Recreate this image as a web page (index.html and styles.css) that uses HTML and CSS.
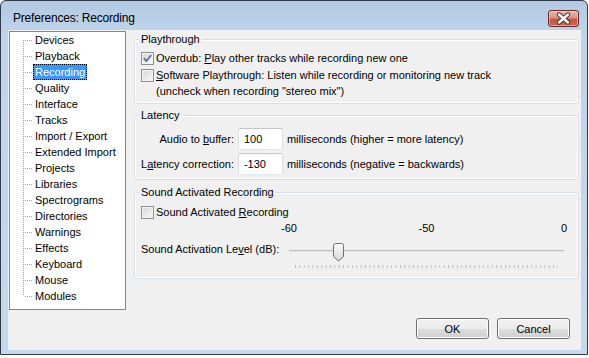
FILE: index.html
```html
<!DOCTYPE html>
<html>
<head>
<meta charset="utf-8">
<title>Preferences: Recording</title>
<link rel="stylesheet" href="styles.css">
</head>
<body>
<div class="window">
  <div class="titlebar">
    <span class="title">Preferences: Recording</span>
    <div class="close" aria-label="Close">
      <svg width="31" height="17" viewBox="0 0 31 17">
        <path d="M11 4.5 L20 12.5 M20 4.5 L11 12.5" stroke="#4a3030" stroke-width="4.4" stroke-linecap="round" fill="none"/>
        <path d="M11 4.5 L20 12.5 M20 4.5 L11 12.5" stroke="#ffffff" stroke-width="2.4" stroke-linecap="round" fill="none"/>
      </svg>
    </div>
  </div>
  <div class="client">
    <div class="main">
      <div class="tree">
        <ul>
          <li><span>Devices</span></li>
          <li><span>Playback</span></li>
          <li class="sel"><span>Recording</span></li>
          <li><span>Quality</span></li>
          <li><span>Interface</span></li>
          <li><span>Tracks</span></li>
          <li><span>Import / Export</span></li>
          <li><span>Extended Import</span></li>
          <li><span>Projects</span></li>
          <li><span>Libraries</span></li>
          <li><span>Spectrograms</span></li>
          <li><span>Directories</span></li>
          <li><span>Warnings</span></li>
          <li><span>Effects</span></li>
          <li><span>Keyboard</span></li>
          <li><span>Mouse</span></li>
          <li><span>Modules</span></li>
        </ul>
      </div>
      <div class="panel">
        <div class="group g1">
          <div class="legend">Playthrough</div>
          <div class="check r1"><span class="box"><svg width="11" height="11" viewBox="0 0 11 11"><path d="M1.8 5.2 L4.3 8 L9.2 2" stroke="#5a6f9c" stroke-width="1.8" fill="none"/></svg></span><span>Overdub: <u>P</u>lay other tracks while recording new one</span></div>
          <div class="check r2"><span class="box"></span><span><u>S</u>oftware Playthrough: Listen while recording or monitoring new track</span></div>
          <div class="note">(uncheck when recording "stereo mix")</div>
        </div>
        <div class="group g2">
          <div class="legend">Latency</div>
          <div class="latency">
            <span class="lab">Audio to <u>b</u>uffer:</span>
            <span class="field">100</span>
            <span>milliseconds (higher = more latency)</span>
            <span class="lab">L<u>a</u>tency correction:</span>
            <span class="field">-130</span>
            <span>milliseconds (negative = backwards)</span>
          </div>
        </div>
        <div class="group g3">
          <div class="legend">Sound Activated Recording</div>
          <div class="check r3"><span class="box"></span><span>Sound Activated <u>R</u>ecording</span></div>
          <div class="level">
            <div class="scale">
              <span class="mark"><span>-60</span></span>
              <span class="mark"><span>-50</span></span>
              <span class="mark"><span>0</span></span>
            </div>
            <span class="levlab">Sound Activation Le<u>v</u>el (dB):</span>
            <div class="slider">
              <div class="track"></div>
              <div class="ticks"></div>
              <svg class="thumb" width="11" height="19" viewBox="0 0 11 19">
                <defs>
                  <linearGradient id="tg" x1="0" y1="0" x2="0" y2="1">
                    <stop offset="0" stop-color="#fbfbfb"/>
                    <stop offset="1" stop-color="#d8d8d8"/>
                  </linearGradient>
                </defs>
                <path d="M0.5 2.5 A2 2 0 0 1 2.5 0.5 H8.5 A2 2 0 0 1 10.5 2.5 V13.5 L5.5 18 L0.5 13.5 Z" fill="url(#tg)" stroke="#707070"/>
              </svg>
            </div>
          </div>
        </div>
      </div>
    </div>
    <div class="buttons">
      <div class="btn">OK</div>
      <div class="btn">Cancel</div>
    </div>
  </div>
</div>
</body>
</html>
```

FILE: styles.css
```css
html, body {
  margin: 0;
  padding: 0;
  background: #ffffff;
}

body {
  font-family: "Liberation Sans", Arial, sans-serif;
  font-size: 11px;
  color: #000;
}

.window {
  width: 588px;
  height: 355px;
  box-sizing: border-box;
  border: 1px solid #2f3b47;
  border-radius: 6px 6px 0 0;
  background: linear-gradient(#b1c9e2, #bed4eb 30px, #c4d8ee);
  box-shadow: 0 1px 0 #4aa8b6, 0 2px 0 #6cc0cc;
  overflow: hidden;
}

.titlebar {
  height: 29px;
  display: flex;
  align-items: flex-start;
  justify-content: space-between;
  padding: 0 8px 0 12px;
}

.title {
  margin-top: 10px;
  font-size: 12px;
  line-height: 14px;
  letter-spacing: -0.2px;
  color: #000;
}

.close {
  margin-top: 9px;
  width: 31px;
  height: 17px;
  box-sizing: border-box;
  border: 1px solid #6b2a2a;
  border-radius: 3px;
  background: linear-gradient(#e9b4a8 0%, #dd948a 45%, #c8503f 55%, #d06a55 100%);
  box-shadow: inset 0 0 0 1px rgba(255, 220, 210, 0.5);
  display: flex;
  align-items: center;
  justify-content: center;
}

.close svg {
  display: block;
  margin: -1px;
}

.client {
  margin: 0 6px 0 7px;
  height: 320px;
  background: #f0f0f0;
  display: flex;
  flex-direction: column;
}

.main {
  display: flex;
  align-items: flex-start;
  padding: 1px 0 0 1px;
}

.tree {
  width: 117px;
  height: 279px;
  box-sizing: border-box;
  border: 1px solid #828790;
  background: #fff;
}

.tree ul {
  list-style: none;
  margin: 0;
  padding: 0;
}

.tree li {
  position: relative;
  height: 16px;
  padding-left: 23px;
}

.tree li::before {
  content: "";
  position: absolute;
  left: 13px;
  top: 0;
  bottom: 0;
  width: 1px;
  background: repeating-linear-gradient(to bottom, #a0a0a0 0 1px, transparent 1px 2px);
}

.tree li:first-child::before {
  top: 8px;
}

.tree li:last-child::before {
  bottom: 8px;
}

.tree li::after {
  content: "";
  position: absolute;
  left: 15px;
  top: 8px;
  width: 8px;
  height: 1px;
  background: repeating-linear-gradient(to right, #a0a0a0 0 1px, transparent 1px 2px);
}

.tree li span {
  display: inline-block;
  line-height: 14px;
  padding: 0 1px;
  border: 1px solid transparent;
}

.tree li.sel span {
  background: #3399ff;
  color: #fff;
  border: 1px dotted #000;
}

.panel {
  flex: 1;
  margin: 0 2px 0 8px;
  padding-top: 8px;
}

.group {
  box-sizing: border-box;
  border: 1px solid #d5dfe5;
  border-radius: 3px;
  box-shadow: inset 0 0 0 1px #ffffff;
  display: flex;
  flex-direction: column;
  align-items: flex-start;
}

.g1 { height: 65px; }
.g2 { height: 65px; margin-top: 11px; }
.g3 { height: 87px; margin-top: 12px; }

.legend {
  margin: -7px 0 0 4px;
  padding: 0 2px;
  line-height: 13px;
  background: #f0f0f0;
}

.check {
  display: flex;
  align-items: center;
  height: 16px;
  padding-left: 6px;
}

.r1 { margin-top: 4px; }
.r2 { margin-top: 1px; }
.r3 { margin-top: 5px; }

.box {
  width: 13px;
  height: 13px;
  box-sizing: border-box;
  border: 1px solid #8e8f8f;
  background: linear-gradient(135deg, #d6d6d6, #f9f9f9);
  box-shadow: inset 0 0 0 1px #f4f4f4;
  margin-right: 2px;
  flex: none;
}

.box svg {
  display: block;
}

.note {
  line-height: 16px;
  padding-left: 21px;
}

.latency {
  margin-top: 6px;
  padding-left: 6px;
  display: grid;
  grid-template-columns: auto 45px auto;
  column-gap: 4px;
  row-gap: 3px;
  align-items: center;
}

.lab {
  text-align: right;
  white-space: nowrap;
}

.field {
  height: 22px;
  box-sizing: border-box;
  border: 1px solid;
  border-color: #c4c6cc #dcdee3 #e3e6ea #dcdee3;
  border-radius: 2px;
  background: #fff;
  padding-left: 5px;
  line-height: 20px;
}

.level {
  align-self: stretch;
  padding-left: 6px;
  display: grid;
  grid-template-columns: 148px 275px;
  align-items: start;
}

.scale {
  grid-column: 2;
  display: flex;
  justify-content: space-between;
  height: 16px;
  line-height: 16px;
}

.mark {
  width: 0;
  display: flex;
  justify-content: center;
  white-space: nowrap;
}

.levlab {
  margin-top: 5px;
  line-height: 16px;
  white-space: nowrap;
}

.slider {
  position: relative;
  margin-top: 4px;
  height: 28px;
}

.track {
  margin-top: 10px;
  height: 1px;
  background: #bdbdbd;
  border-bottom: 1px solid #e4e4e4;
}

.ticks {
  margin: 13px 6px 0 6px;
  height: 3px;
  background: linear-gradient(to right, #b8b8b8 1px, transparent 1px) 0 0 / 4.3833px 100% repeat-x;
}

.thumb {
  position: absolute;
  left: 44px;
  top: 3px;
  display: block;
}

.buttons {
  margin-top: 8px;
  display: flex;
  justify-content: flex-end;
  gap: 8px;
  padding-right: 11px;
}

.btn {
  width: 73px;
  height: 21px;
  box-sizing: border-box;
  border: 1px solid #707070;
  border-radius: 3px;
  background: linear-gradient(#f2f2f2 0%, #ebebeb 50%, #dddddd 50%, #cfcfcf 100%);
  box-shadow: inset 0 0 0 1px #fcfcfc;
  display: flex;
  align-items: center;
  justify-content: center;
  line-height: 14px;
}
```
